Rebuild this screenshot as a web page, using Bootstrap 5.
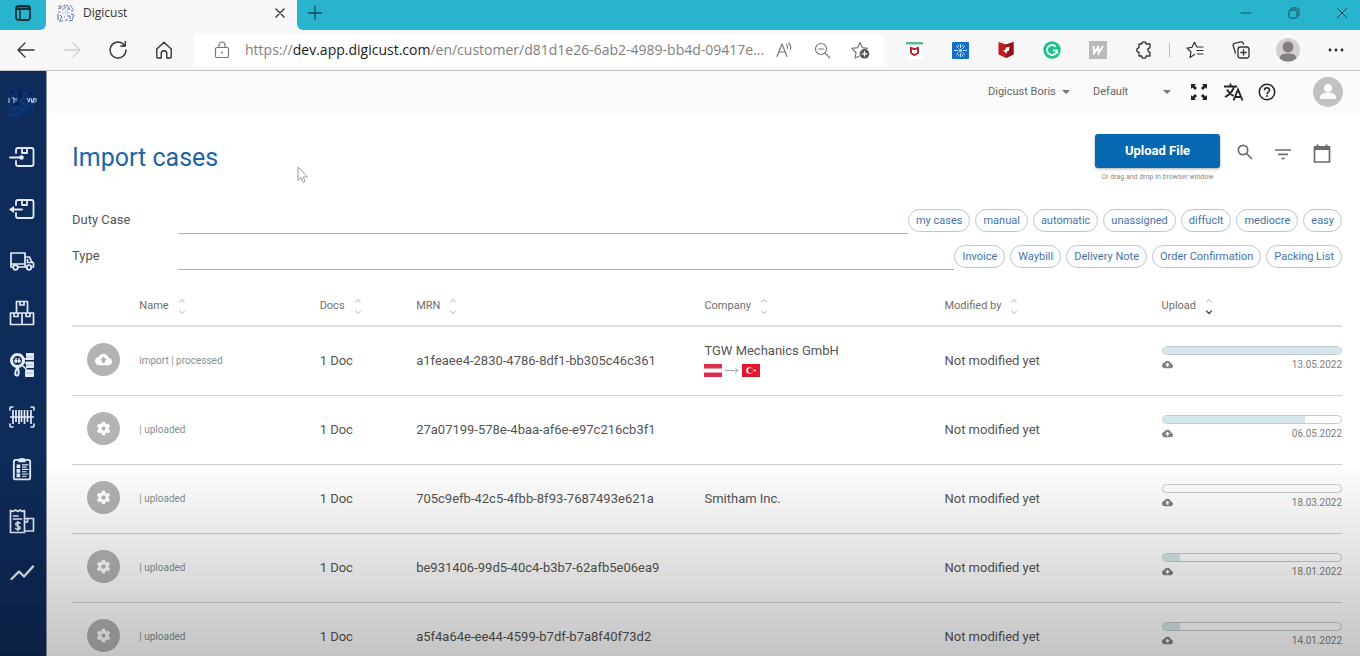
<!DOCTYPE html>
<html lang="en">
<head>
<meta charset="utf-8">
<meta name="viewport" content="width=device-width, initial-scale=1">
<title>Digicust</title>
<link href="https://cdn.jsdelivr.net/npm/bootstrap@5.3.0/dist/css/bootstrap.min.css" rel="stylesheet">
<style>
  :root { --teal: #29b4cd; --chrome: #f7f7f7; --navy: #0f2b59; --ink: #555; --brand: #0768b2; }
  body { font-family: Roboto, "Liberation Sans", sans-serif; font-size: 13px; color: var(--ink); background: #fff; }
  button { padding: 0; border: 0; background: none; color: inherit; }
  svg { display: block; flex: none; }
  .ln { fill: none; stroke: currentColor; stroke-linecap: round; stroke-linejoin: round; }

  /* browser frame */
  .browser { font-family: "Open Sans", "Noto Sans", sans-serif; color: #333; }
  .tabstrip { height: 30px; background: var(--chrome); }
  .strip-start { width: 46px; background: var(--teal); border-bottom-right-radius: 6px; color: #10303a; }
  .page-tab { width: 251px; padding: 0 12px 4px 11px; font-size: 12px; }
  .strip-rest { background: var(--teal); border-bottom-left-radius: 6px; padding: 0 0 4px 10px; color: #174b58; }
  .win-btn { width: 36px; }
  .toolbar { height: 41px; background: var(--chrome); border-bottom: 1px solid #c4c4c4; padding-left: 3px; }
  .tool { width: 46px; height: 40px; display: flex; align-items: center; justify-content: center; color: #333; }
  .tool.wide { width: 48px; }
  .address { height: 32px; background: #fff; border-radius: 4px; margin: 0 7px; padding: 0 5px 0 20px; }
  .url { font-size: 14px; line-height: 20px; color: #808080; margin-left: 15px; }
  .url b { font-weight: 400; color: #222; }
  .address .tool { width: 38px; height: 32px; color: #777; }
  .vline { width: 1px; height: 14px; background: #bbb; margin: 0 2px; }

  /* application */
  .app { height: calc(100vh - 71px); overflow: hidden; }
  .side { width: 47px; background: var(--navy); color: #e3ebf8; border-right: 1px solid #8d98ae; padding-top: 15px; }
  .side a { height: 52px; width: 44px; display: flex; align-items: center; justify-content: center; color: inherit; }
  .side a.brand { height: 45px; align-items: flex-start; color: #5f83bd; }
  .topbar { height: 42px; background: #fafafa; padding-right: 17px; color: #333; }
  .pick { appearance: none; border: 0; font-size: 11px; color: #666; padding: 0; background: transparent url("data:image/svg+xml,%3Csvg xmlns='http://www.w3.org/2000/svg' width='8' height='4'%3E%3Cpath d='M0 0h8L4 4z' fill='%23777'/%3E%3C/svg%3E") no-repeat right center; }
  .content { padding: 21px 18px 0 25px; }
  h1 { font-size: 25px; line-height: 32px; font-weight: 400; color: #1b66a8; margin: 8px 0 0; }
  .btn-upload { width: 125px; height: 34px; border-radius: 3px; background: var(--brand); color: #fff; font-size: 13px; font-weight: 700; box-shadow: 0 1px 3px #0005; }
  .hint { font-size: 7px; line-height: 10px; color: #888; margin-top: 4px; }
  .acts { gap: 14px; height: 38px; margin: 0 9px 0 13px; }
  .act { width: 24px; height: 24px; color: #6b6b6b; }
  .filters { margin-top: 20px; }
  .filter-row { height: 36px; }
  .filter-row label { width: 106px; }
  .filter-row input { height: 28px; border: 0; border-bottom: 1px solid #b0b0b0; min-width: 0; background: none; outline: 0; }
  .chips { gap: 5px; }
  .chip { height: 23px; border: 1px solid #b9c6d0; border-radius: 12px; padding: 0 7px; font-size: 11px; line-height: 21px; color: #4a73a3; white-space: nowrap; background: #fcfeff; }

  .cases { width: 100%; table-layout: fixed; margin-top: 12px; }
  .cases th { height: 40px; font-size: 11px; font-weight: 400; color: #6e6e6e; padding: 2px 0 0; border-bottom: 2px solid #dedede; }
  .cases td { height: 69px; padding: 0; border-bottom: 1px solid #d2d2d2; white-space: nowrap; }
  .cases td.stack { padding-bottom: 4px; }
  .sort { color: #aaa; margin-left: 9px; }
  .disc { width: 33px; height: 33px; border-radius: 50%; background: #b3b3b3; color: #fff; margin: 0 0 2px 15px; }
  .cases td.state { font-size: 10px; color: #84928f; }
  .bar { height: 9px; border: 1px solid #c4cbcd; border-radius: 5px; background: #fff; overflow: hidden; }
  .bar .fill { height: 100%; background: #d5e6ea; }
  .date { font-size: 10px; line-height: 14px; color: #808080; margin-top: 3px; }
  .shade { position: fixed; left: 0; right: 0; bottom: 0; height: 196px; background: linear-gradient(#0000, #0000003b); pointer-events: none; }
  .pointer { position: fixed; left: 297px; top: 166px; }
</style>
</head>
<body>
<svg width="0" height="0" class="position-absolute" aria-hidden="true">
  <symbol id="sorter" viewBox="0 0 8 18"><path class="ln" d="M1.500 4 4 1.500 6.500 4M1.500 13 4 15.500 6.500 13"/></symbol>
  <symbol id="cloud" viewBox="0 0 24 24"><path fill="currentColor" fill-rule="evenodd" d="M19.350 10.040C18.670 6.590 15.640 4 12 4 9.110 4 6.600 5.640 5.350 8.040 2.340 8.360 0 10.910 0 14c0 3.310 2.690 6 6 6h13c2.760 0 5-2.240 5-5 0-2.640-2.050-4.780-4.650-4.960zM14 13v4h-4v-4H7l5-5 5 5z"/></symbol>
  <symbol id="gear" viewBox="0 0 24 24"><path fill="currentColor" fill-rule="evenodd" d="M19.140 12.940c.04-.3.060-.61.060-.94s-.02-.64-.07-.94l2.030-1.580a.49.49 0 0 0 .12-.61l-1.920-3.320a.49.49 0 0 0-.59-.22l-2.390.96a7 7 0 0 0-1.620-.94l-.36-2.540A.48.480 0 0 0 13.920 2.400h-3.840a.47.470 0 0 0-.47.410l-.36 2.540c-.59.240-1.130.57-1.620.94l-2.390-.96a.47.470 0 0 0-.59.220L2.740 8.870a.47.470 0 0 0 .12.610l2.030 1.580a6 6 0 0 0 0 1.880l-2.030 1.580a.49.490 0 0 0-.12.610l1.920 3.320c.12.220.37.290.59.220l2.390-.96c.5.380 1.030.7 1.620.94l.36 2.540c.05.240.24.410.48.410h3.840c.24 0 .44-.17.470-.41l.36-2.540a7 7 0 0 0 1.620-.94l2.390.96c.22.080.47 0 .59-.22l1.920-3.320a.47.470 0 0 0-.12-.61zM12 15a3 3 0 1 1 0-6 3 3 0 0 1 0 6z"/></symbol>
  <symbol id="person" viewBox="0 0 30 30"><circle cx="15" cy="15" r="15" fill="#c1c1c1"/><circle cx="15" cy="11" r="4" fill="#fff"/><path fill="#fff" d="M7 22v-2c0-3 5-4.500 8-4.500s8 1.500 8 4.500v2z"/></symbol>
</svg>

<header class="browser">
  <div class="tabstrip d-flex">
    <div class="strip-start d-flex justify-content-center align-items-center pb-1">
      <button aria-label="Tab actions"><svg width="16" height="16" viewBox="0 0 16 16"><rect x="1" y="1" width="14" height="14" rx="2.500" fill="none" stroke="currentColor" stroke-width="1.800"/><path d="M1 2.500h14V5H1z" fill="currentColor"/><path d="M5 4v11" stroke="currentColor" stroke-width="1.500"/></svg></button>
    </div>
    <div class="page-tab d-flex align-items-center">
      <svg width="18" height="18" viewBox="0 0 18 18" fill="none" stroke="#7485b8"><path d="M1 2h4M7 1l4 1M13 1l3 4M1 5l3-1M5 6l4-3M10 5h3M14 7l3-1M1 8h3M6 2l3 2M2 3l3 1M11 2l2 4"/><path d="M1 10v6M3 11l2 2-2 3M7 13h1M10 12h3v3M14 10l3 1-2 4M2 17h4M8 16h3M12 17l4-1" stroke="#516aa8"/><path d="M5 9h8M8 7h3" stroke="#bcc5dd"/></svg>
      <span class="ms-2">Digicust</span>
      <button class="ms-auto" aria-label="Close tab"><svg width="10" height="10" viewBox="0 0 10 10"><path class="ln" stroke-width="1.400" d="M1 1l8 8M9 1 1 9"/></svg></button>
    </div>
    <div class="strip-rest flex-grow-1 d-flex align-items-center">
      <button aria-label="New tab"><svg width="16" height="16" viewBox="0 0 16 16"><path class="ln" stroke-width="1.300" d="M8 1.500v13M1.500 8h13"/></svg></button>
      <div class="ms-auto d-flex" style="gap:12px">
        <button class="win-btn d-flex justify-content-center" aria-label="Minimize"><svg width="12" height="12" viewBox="0 0 12 12"><path class="ln" d="M1 6h10"/></svg></button>
        <button class="win-btn d-flex justify-content-center" aria-label="Restore"><svg width="12" height="12" viewBox="0 0 12 12"><rect class="ln" x="1" y="3" width="8" height="8" rx="1.500"/><path class="ln" d="M3 1.500Q3.500 1 4 1h4.500A2.500 2.500 0 0 1 11 3.500V8q0 .7-.6 1"/></svg></button>
        <button class="win-btn d-flex justify-content-center" aria-label="Close"><svg width="12" height="12" viewBox="0 0 12 12"><path class="ln" d="M1 1l10 10M11 1 1 11"/></svg></button>
      </div>
    </div>
  </div>

  <nav class="toolbar d-flex align-items-center" aria-label="Browser toolbar">
    <button class="tool" aria-label="Back"><svg width="18" height="18" viewBox="0 0 18 18"><path class="ln" stroke-width="1.300" d="M17 9H1.500M8 2 1 9l7 7"/></svg></button>
    <button class="tool" aria-label="Forward"><svg width="18" height="18" viewBox="0 0 18 18" color="#d0d0d0"><path class="ln" stroke-width="1.300" d="M1 9h15.500M10 2l7 7-7 7"/></svg></button>
    <button class="tool" aria-label="Refresh"><svg width="20" height="20" viewBox="0 0 20 20"><path class="ln" stroke-width="1.400" d="M18 10a8 8 0 1 1-3-6.200l2 2.200M17.300 1.500V6h-4.500"/></svg></button>
    <button class="tool" aria-label="Home"><svg width="18" height="18" viewBox="0 0 18 18"><path class="ln" stroke-width="1.400" d="M1.800 8 9 1.200 16.200 8v8q0 1-1 1h-3.400v-4.500a2.800 2.800 0 0 0-5.600 0V17H2.800q-1 0-1-1z"/></svg></button>
    <div class="address flex-grow-1 d-flex align-items-center">
      <svg width="16" height="18" viewBox="0 0 16 18" color="#777"><path class="ln" stroke-width="1.200" d="M3 6.500h10q1.500 0 1.500 1.500v7q0 1.500-1.500 1.500H3q-1.500 0-1.500-1.500V8Q1.500 6.500 3 6.500zM5 6V4a3 3 0 0 1 6 0v2"/><circle cx="8" cy="11.500" r="1" fill="currentColor"/></svg>
      <span class="url text-nowrap">https://<b>dev.app.digicust.com</b>/en/customer/d81d1e26-6ab2-4989-bb4d-09417e...</span>
      <div class="ms-auto d-flex">
        <button class="tool" aria-label="Read aloud"><svg width="17" height="18" viewBox="0 0 17 18"><path class="ln" stroke-width="1.200" d="M1 15.500 6 3l5 12.500M2.800 11h6.400M10.500 3.500q1.500 1.500 1 4M12.700 2q2.800 2.500 1.700 6.500"/></svg></button>
        <button class="tool" aria-label="Zoom"><svg width="17" height="17" viewBox="0 0 17 17"><circle class="ln" cx="7" cy="7" r="5.500" stroke-width="1.200"/><path class="ln" stroke-width="1.200" d="M11 11l4.800 4.800M4.500 7h5"/></svg></button>
        <button class="tool" aria-label="Add to favorites"><svg width="19" height="18" viewBox="0 0 19 18"><path class="ln" stroke-width="1.200" d="M8.500 15 4 17l1-5.500L1 7.300l5.500-.6L9 1.500l2.300 5.200 5.200.6"/><circle cx="13.500" cy="12.800" r="4.800" fill="#555"/><path stroke="#fff" stroke-width="1.200" d="M13.500 10v5.600M10.700 12.800h5.600"/></svg></button>
      </div>
    </div>
    <button class="tool" aria-label="Password extension"><svg width="17" height="17" viewBox="0 0 17 17"><path fill="#fff" d="M0 0h17v17H0z"/><path fill="#5bb893" d="M0 0h17v2.500H0z"/><path fill="none" stroke="#b92632" stroke-width="2" d="M5 6v5l3.500 2 3.500-2V6L8.500 7.300z"/></svg></button>
    <button class="tool" aria-label="Spark extension"><svg width="17" height="17" viewBox="0 0 17 17"><rect width="17" height="17" rx="1" fill="#1170c8"/><path stroke="#b9e2ff" d="M8.500 2v4M8.500 11v4M2 8.500h4M11 8.500h4M4 4l2.700 2.700M10.300 10.300 13 13M13 4l-2.700 2.700M6.700 10.300 4 13M6 2.500l1 2M11 2.500l-1 2M6 14.500l1-2M11 14.500l-1-2"/><circle cx="8.500" cy="8.500" r="1.700" fill="#9ad4ff"/></svg></button>
    <button class="tool" aria-label="Safe browsing extension"><svg width="16" height="18" viewBox="0 0 16 18"><path fill="#c01b24" d="M.5 1 8 3.500 15.500 1v12.500L8 17 .5 13.500z"/><path fill="#951219" d="M8 3.500 15.500 1v12.500L8 17z"/><path fill="#fff" d="M11.500 5.500 11 9.500l-2 1-.8 2.500-1.200-2-2-1 2.500-1.500.5-2z"/></svg></button>
    <button class="tool" aria-label="Writing extension"><svg width="18" height="18" viewBox="0 0 18 18"><circle cx="9" cy="9" r="8.700" fill="#1cc08f"/><path fill="none" stroke="#fff" stroke-width="1.800" d="M12.600 5.500A5 5 0 1 0 14 9.500h-3.800M14 9.500v3.500"/></svg></button>
    <button class="tool" aria-label="Wiki extension"><svg width="18" height="18" viewBox="0 0 18 18"><path fill="#bababa" d="M0 0h18v18H0z"/><path fill="none" stroke="#fff" stroke-width="2" d="M4.500 5l.6 7L9 6.500l.7 5.500L14 5"/></svg></button>
    <button class="tool" aria-label="Extensions"><svg width="18" height="18" viewBox="0 0 18 18"><path class="ln" stroke-width="1.300" d="M4 3h2.700a2.200 2.200 0 0 1 4.400 0H15v3.800a2.200 2.200 0 0 0 0 4.400V15h-3.900a2.200 2.200 0 0 1-4.400 0H4v-3.800a2.200 2.200 0 0 1 0-4.400z"/></svg></button>
    <span class="vline"></span>
    <button class="tool" aria-label="Favorites"><svg width="18" height="18" viewBox="0 0 18 18"><path class="ln" stroke-width="1.200" d="M8.500 13.500 4 16.500l1-5.500-4-4 5-.7 2.500-5 2.300 4.700H17M11 9.500h6M11.500 13H17"/></svg></button>
    <button class="tool" aria-label="Collections"><svg width="18" height="18" viewBox="0 0 18 18"><rect class="ln" x="6" y="6" width="11" height="11" rx="2.500" stroke-width="1.300"/><path class="ln" stroke-width="1.300" d="M11.500 8.800v5.400M8.800 11.500h5.400M3.500 12 1.200 4.800Q.8 3 2.500 2.400L9 .9q1.700-.3 2.200 1.300l.3 1"/></svg></button>
    <button class="tool wide" aria-label="Profile"><svg width="24" height="24" viewBox="0 0 24 24"><circle cx="12" cy="12" r="12" fill="#d5d0cd"/><circle cx="12" cy="9" r="5.500" fill="#808080"/><path fill="#808080" d="M3.500 20c1-4 5-4.500 8.500-4.500s7.500.5 8.500 4.500A12 12 0 0 1 3.500 20z"/></svg></button>
    <button class="tool wide" aria-label="More"><svg width="16" height="4" viewBox="0 0 16 4" fill="#222"><circle cx="2" cy="2" r="1.400"/><circle cx="8" cy="2" r="1.400"/><circle cx="14" cy="2" r="1.400"/></svg></button>
  </nav>
</header>

<div class="app d-flex">
  <nav class="side flex-shrink-0" aria-label="Main menu">
    <a class="brand" href="#" aria-label="Digicust home"><svg width="30" height="32" viewBox="0 0 30 32" fill="none"><path fill="#0b2f69" d="M1 1h8l3 5 8-4 8 2v20l-5 4-9 3H1z"/><path stroke="#1d4a8e" stroke-dasharray="3 1" d="M3 22l4 2 3-3 4 4 5-4 4-8M18 7l-4 9 5 3M2 29h6l4-2M24 20l4-3"/><path stroke="#071f48" stroke-width="2" d="M3 5l5 3M12 3l2 9M22 5l3 4M7 18h6"/><path stroke="#c3d3ee" d="M2 12v5M5 12h2v5M9 12v3M20 12l2 4 1-4M24 12l1 5 2-5v5M29 12v4"/></svg></a>
    <a href="#" aria-label="Import"><svg width="26" height="24" viewBox="0 0 26 24"><path class="ln" stroke-width="1.800" d="M7 8V5q0-2 2-2h13.500q2 0 2 2v14q0 2-2 2H9q-2 0-2-2v-3M13 3v5h5V3M1 12.500h11"/><circle cx="12.500" cy="12.500" r="2.300" fill="currentColor"/></svg></a>
    <a href="#" aria-label="Export"><svg width="26" height="24" viewBox="0 0 26 24"><path class="ln" stroke-width="1.800" d="M7 8V5q0-2 2-2h13.500q2 0 2 2v14q0 2-2 2H9q-2 0-2-2v-3M13 3v5h5V3M2 12.500h11"/><path fill="currentColor" d="M0 12.500 5 9v7z"/></svg></a>
    <a href="#" aria-label="Transport"><svg width="26" height="22" viewBox="0 0 26 22"><path class="ln" stroke-width="1.700" d="M4 17H2V3h14v14H9M2 14h14M16 7h4.500l2 4.500 2 1.500v4h-2M18 17h-2M18.500 9.500v3h4"/><circle class="ln" cx="6.500" cy="17.500" r="2.300" stroke-width="1.700"/><circle class="ln" cx="20" cy="17.500" r="2.300" stroke-width="1.700"/></svg></a>
    <a href="#" aria-label="Warehouse"><svg width="26" height="26" viewBox="0 0 26 26"><path class="ln" stroke-width="1.700" d="M7.500 1.500h11V13h-11zM11 1.500V5h4V1.500M1.500 13H13v11.500H1.500zM13 13h11.500v11.500H13zM5 13v3.500h4V13M17 13v3.500h4V13"/></svg></a>
    <a href="#" aria-label="Classification"><svg width="26" height="26" viewBox="0 0 26 26"><circle cx="8.500" cy="8.500" r="6" fill="none" stroke="currentColor" stroke-width="3"/><path stroke="currentColor" stroke-width="1.500" d="M5 9h7M7 6v5M10 6v5M13 13l5 5M14 7h4M15 10l3 2"/><path class="ln" stroke-width="2" d="M8.500 15c-2 4-3.500 8-1 8.500s3-4 1-8.500z"/><path fill="currentColor" d="M17 1h7q1 0 1 1v5q0 1-1 1h-7zM17 9.500h7q1 0 1 1v4.500q0 1-1 1h-7zM17 17.500h7q1 0 1 1V24q0 1-1 1h-7q-1 0-1-1v-5z"/><path stroke="#a9b6cd" d="M17 5h7M17 13h7M17 21h7"/></svg></a>
    <a href="#" aria-label="Barcode"><svg width="26" height="24" viewBox="0 0 26 24"><path class="ln" stroke-width="1.600" d="M1 5V3q0-1 1-1h2M22 2h2q1 0 1 1v2M25 19v2q0 1-1 1h-2M4 22H2q-1 0-1-1v-2"/><path stroke="currentColor" stroke-width="1.700" d="M4 5v14M7 5v12M10 5v14M12.500 5v12M15.500 5v14M18.500 5v12M22 5v14"/><path stroke="currentColor" stroke-width="1.500" d="M1 12h24"/></svg></a>
    <a href="#" aria-label="Checklists"><svg width="20" height="24" viewBox="0 0 22 26"><rect class="ln" x="2" y="3" width="18" height="21.500" rx="2" stroke-width="2"/><path fill="currentColor" d="M7 3q0-2 4-2t4 2v2.500H7zM5 8h4v4H5zM5 13h4v4H5zM5 18h4v4H5z"/><path stroke="currentColor" stroke-width="1.300" d="M11 8.500h7M11 11h5M11 13.500h7M11 16h5M11 18.500h7M11 21h5"/></svg></a>
    <a href="#" aria-label="Billing"><svg width="26" height="26" viewBox="0 0 26 26"><path class="ln" stroke-width="1.700" d="M15.500 9V2.500l-2 1-2.500-1.500L9 3.500 6.500 2 4 3.500l-2.500-1v22h14zM4.500 8H9M4.500 11h8M15.500 10.500h9V23h-9M18.500 10.500V14h-3"/><path class="ln" stroke-width="1.500" d="M11 15.200q-1-.8-2.300-.7-2 .2-2 1.800 0 1.300 2.200 1.700t2.200 1.800q0 1.600-2.300 1.600-1.500 0-2.300-1M8.800 13.500v9"/></svg></a>
    <a href="#" aria-label="Statistics"><svg width="26" height="18" viewBox="0 0 26 18"><path class="ln" stroke-width="2.400" d="M2.500 15 10 7.500l5 5L24 2.500"/></svg></a>
  </nav>

  <main class="flex-grow-1">
    <div class="topbar d-flex align-items-center justify-content-end">
      <select class="pick" style="width:82px" aria-label="Account"><option>Digicust Boris</option></select>
      <select class="pick" style="width:78px;margin-left:23px" aria-label="Profile"><option>Default</option></select>
      <div class="d-flex" style="gap:10px;margin:0 34px 0 16px">
        <button aria-label="Full screen"><svg width="24" height="24" viewBox="0 0 24 24" fill="#222"><path d="M4 4h5L7.500 5.500l2.500 2.500-2 2-2.500-2.500L4 9zM20 4v5l-1.500-1.500L16 10l-2-2 2.500-2.500L15 4zM4 20v-5l1.500 1.500L8 14l2 2-2.500 2.500L9 20zM20 20h-5l1.500-1.500L14 16l2-2 2.500 2.500L20 15z"/></svg></button>
        <button aria-label="Language"><svg width="24" height="24" viewBox="0 0 24 24"><path fill="none" stroke="#222" stroke-width="1.800" d="M3 6.500h13M9.500 3.500v3M13 6.500C12 11 8 15 4 17M6 9.500c1.500 3 4 5 6.500 6.500M12.500 20.500l4.500-11 4.500 11M14.200 17h5.600"/></svg></button>
        <button aria-label="Help"><svg width="24" height="24" viewBox="0 0 24 24"><circle cx="12" cy="12" r="7.700" fill="none" stroke="#222" stroke-width="1.500"/><path fill="none" stroke="#222" stroke-width="1.500" d="M9.500 10.200c0-3.300 5-3.300 5 0 0 2-2.500 2-2.500 4"/><circle cx="12" cy="16" r=".9" fill="#222"/></svg></button>
      </div>
      <button aria-label="User"><svg width="30" height="30"><use href="#person"/></svg></button>
    </div>

    <div class="content">
      <div class="d-flex justify-content-between align-items-start">
        <h1>Import cases</h1>
        <div class="d-flex">
          <div class="text-center">
            <button class="btn-upload d-block">Upload File</button>
            <div class="hint">Or drag and drop in browser window</div>
          </div>
          <div class="acts d-flex align-items-center">
            <button class="act" aria-label="Search"><svg width="24" height="24" viewBox="0 0 24 24"><path fill="none" stroke="currentColor" stroke-width="1.700" d="M13.500 12.500l5.500 5.500"/><circle cx="10" cy="9" r="4.700" fill="none" stroke="currentColor" stroke-width="1.700"/></svg></button>
            <button class="act" aria-label="Filter"><svg width="24" height="24" viewBox="0 0 24 24"><path stroke="currentColor" stroke-width="1.700" d="M4 9h16M7 13.300h10M10.300 17.500h3.400"/></svg></button>
            <button class="act" aria-label="Calendar"><svg width="24" height="24" viewBox="0 0 24 24"><path fill="none" stroke="currentColor" stroke-width="1.700" d="M5.500 6h15v15h-15z"/><path fill="currentColor" d="M5 5h16v4H5zM7.500 3.500h2V6h-2zM16.500 3.500h2V6h-2z"/></svg></button>
          </div>
        </div>
      </div>

      <div class="filters">
        <div class="filter-row d-flex align-items-center">
          <label for="duty">Duty Case</label>
          <input id="duty" class="flex-grow-1" type="text">
          <div class="chips d-flex">
            <button class="chip">my cases</button><button class="chip">manual</button><button class="chip">automatic</button><button class="chip">unassigned</button><button class="chip">diffuclt</button><button class="chip">mediocre</button><button class="chip">easy</button>
          </div>
        </div>
        <div class="filter-row d-flex align-items-center">
          <label for="kind">Type</label>
          <input id="kind" class="flex-grow-1" type="text">
          <div class="chips d-flex">
            <button class="chip">Invoice</button><button class="chip">Waybill</button><button class="chip">Delivery Note</button><button class="chip">Order Confirmation</button><button class="chip">Packing List</button>
          </div>
        </div>
      </div>

      <table class="cases">
        <colgroup><col style="width:5.3%"><col style="width:14.2%"><col style="width:7.6%"><col style="width:22.7%"><col style="width:18.9%"><col style="width:17.1%"><col style="width:14.2%"></colgroup>
        <thead><tr>
          <th></th>
          <th><div class="d-flex align-items-center">Name<svg class="sort" width="8" height="18"><use href="#sorter"/></svg></div></th>
          <th><div class="d-flex align-items-center">Docs<svg class="sort" width="8" height="18"><use href="#sorter"/></svg></div></th>
          <th><div class="d-flex align-items-center">MRN<svg class="sort" width="8" height="18"><use href="#sorter"/></svg></div></th>
          <th><div class="d-flex align-items-center">Company<svg class="sort" width="8" height="18"><use href="#sorter"/></svg></div></th>
          <th><div class="d-flex align-items-center">Modified by<svg class="sort" width="8" height="18"><use href="#sorter"/></svg></div></th>
          <th><div class="d-flex align-items-center">Upload<svg class="sort" width="8" height="18" viewBox="0 0 8 18"><path class="ln" d="M1.500 4 4 1.500 6.500 4"/><path class="ln" stroke-width="1.500" style="stroke:#555" d="M1.500 13 4 15.500 6.500 13"/></svg></div></th>
        </tr></thead>
        <tbody>
          <tr>
            <td><div class="disc d-flex align-items-center justify-content-center"><svg width="17" height="17"><use href="#cloud"/></svg></div></td>
            <td class="state">import | processed</td><td>1 Doc</td><td>a1feaee4-2830-4786-8df1-bb305c46c361</td>
            <td class="stack"><div class="mb-1">TGW Mechanics GmbH</div>
              <svg width="56" height="13" viewBox="0 0 56 13"><path fill="#dc2e4e" d="M0 0h18v13H0z"/><path fill="#fff" d="M0 4.500h18v4H0z"/><path fill="none" stroke="#aaa" d="M21 6.500h13M31 4l3 2.500L31 9"/><path fill="#e3162c" d="M38 0h18v13H38z"/><circle cx="45.500" cy="6.500" r="3.300" fill="#fff"/><circle cx="46.500" cy="6.500" r="2.500" fill="#e3162c"/><path fill="#fff" d="M49 6.500l2.500-1.200v2.400z"/></svg></td>
            <td>Not modified yet</td>
            <td class="stack"><div class="bar"><div class="fill" style="width:100%"></div></div><div class="date d-flex justify-content-between align-items-center"><svg width="11" height="11"><use href="#cloud"/></svg>13.05.2022</div></td>
          </tr>
          <tr>
            <td><div class="disc d-flex align-items-center justify-content-center"><svg width="17" height="17"><use href="#gear"/></svg></div></td>
            <td class="state">| uploaded</td><td>1 Doc</td><td>27a07199-578e-4baa-af6e-e97c216cb3f1</td><td></td><td>Not modified yet</td>
            <td class="stack"><div class="bar"><div class="fill" style="width:80%"></div></div><div class="date d-flex justify-content-between align-items-center"><svg width="11" height="11"><use href="#cloud"/></svg>06.05.2022</div></td>
          </tr>
          <tr>
            <td><div class="disc d-flex align-items-center justify-content-center"><svg width="17" height="17"><use href="#gear"/></svg></div></td>
            <td class="state">| uploaded</td><td>1 Doc</td><td>705c9efb-42c5-4fbb-8f93-7687493e621a</td><td>Smitham Inc.</td><td>Not modified yet</td>
            <td class="stack"><div class="bar"><div class="fill" style="width:0%"></div></div><div class="date d-flex justify-content-between align-items-center"><svg width="11" height="11"><use href="#cloud"/></svg>18.03.2022</div></td>
          </tr>
          <tr>
            <td><div class="disc d-flex align-items-center justify-content-center"><svg width="17" height="17"><use href="#gear"/></svg></div></td>
            <td class="state">| uploaded</td><td>1 Doc</td><td>be931406-99d5-40c4-b3b7-62afb5e06ea9</td><td></td><td>Not modified yet</td>
            <td class="stack"><div class="bar"><div class="fill" style="width:10%"></div></div><div class="date d-flex justify-content-between align-items-center"><svg width="11" height="11"><use href="#cloud"/></svg>18.01.2022</div></td>
          </tr>
          <tr>
            <td><div class="disc d-flex align-items-center justify-content-center"><svg width="17" height="17"><use href="#gear"/></svg></div></td>
            <td class="state">| uploaded</td><td>1 Doc</td><td>a5f4a64e-ee44-4599-b7df-b7a8f40f73d2</td><td></td><td>Not modified yet</td>
            <td class="stack"><div class="bar"><div class="fill" style="width:10%"></div></div><div class="date d-flex justify-content-between align-items-center"><svg width="11" height="11"><use href="#cloud"/></svg>14.01.2022</div></td>
          </tr>
        </tbody>
      </table>
    </div>
  </main>
</div>
<svg class="pointer" width="12" height="18" viewBox="0 0 12 18"><path fill="#fff" stroke="#999" d="M1 1v13.500l3.200-2.800 2 4.800 2-.9-2-4.600h4.300z"/></svg>
<div class="shade"></div>
<script src="https://cdn.jsdelivr.net/npm/bootstrap@5.3.0/dist/js/bootstrap.bundle.min.js"></script>
</body>
</html>
